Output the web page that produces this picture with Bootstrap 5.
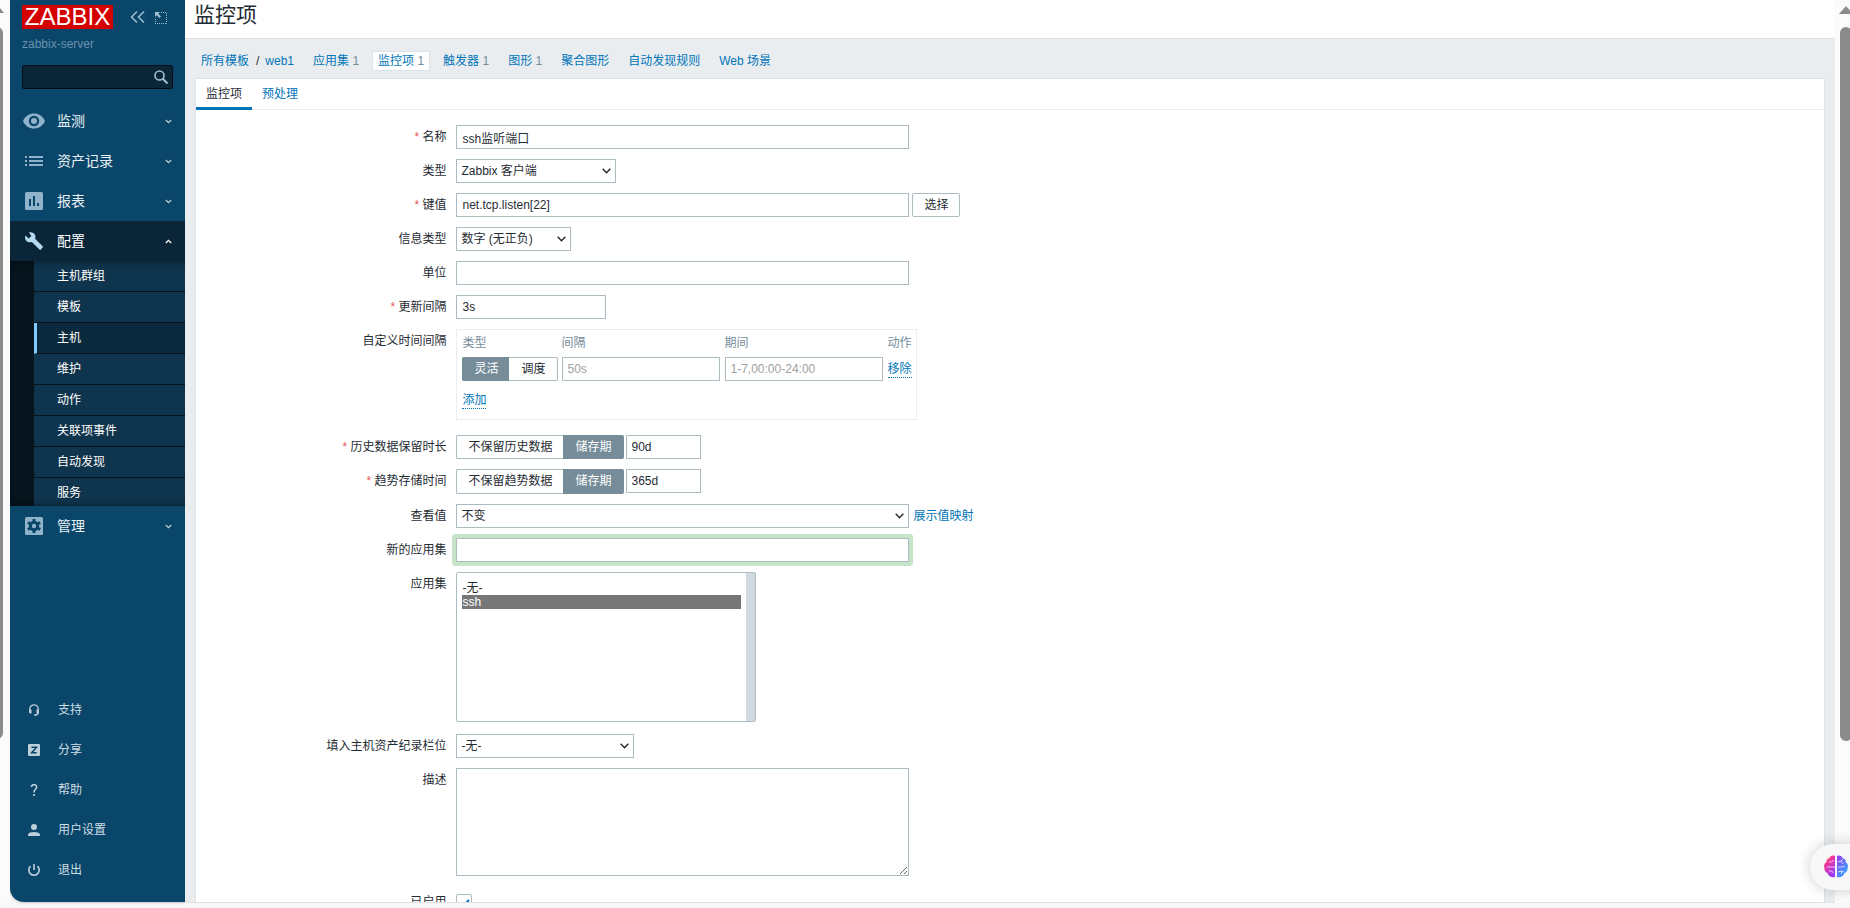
<!DOCTYPE html>
<html lang="zh-CN">
<head>
<meta charset="utf-8">
<meta name="viewport" content="width=device-width, initial-scale=1">
<title>监控项</title>
<link href="https://cdn.jsdelivr.net/npm/bootstrap@5.3.0/dist/css/bootstrap.min.css" rel="stylesheet">
<style>
:root{--zbx-font:"Liberation Sans","Noto Sans CJK SC",sans-serif;--line:#acbbc2;--link:#0275b8;--ink:#1f2c33}
html,body{height:100%}
body{font:12px/16px var(--zbx-font);color:var(--ink);background:#f7f7f7;overflow:hidden;padding-bottom:5px}
a{color:var(--link);text-decoration:none}
.window-body{height:100%;min-height:0}
.edge{width:10px;background:#fbfbfb;position:relative;overflow:hidden}
.edge-thumb{width:12px;height:712px;margin:27px 0 0 -9px;border-radius:6px;background:#8b8b8b}
.page-scroll{width:15px;background:#fbfbfb;overflow:hidden}
.page-scroll svg{display:block;margin:6px 0 0 4px}
.page-thumb{width:12px;height:714px;margin:13px 0 0 5px;border-radius:6px;background:#8b8b8b}
.side{width:175px;margin-bottom:1px;background:#0a466a;border-bottom-left-radius:14px;box-shadow:0 0 3px #0006}
.side-top{padding:5px 12px 0}
.brand{background:#d40000;color:#fff;font-size:24px;line-height:24px;width:91px;text-align:center}
.brand:hover{color:#fff}
.icon-btn{border:0;background:none;padding:0;color:#9ec0d2;line-height:0}
.server{color:#6b93ac;padding-top:7px}
.search{margin-top:13px}
.search input{width:100%;height:24px;background:#0a2537;border:1px solid #020d14;border-radius:2px;color:#fff;padding:0 26px 0 5px}
.search button{position:absolute;right:4px;top:4px}
.menu{margin-top:12px}
.menu-link{height:40px;padding:0 13px 0 15px;font-size:14px;color:#e8f0f4}
.menu-link svg:first-child{width:18px;margin-right:14px;color:#8fb3ca;flex:none;overflow:visible}
.menu-link.open{background:#0a2537;color:#fff}
.menu-link.open svg:first-child{color:#b5d9f0}
.sub{background:#05141d;padding-left:24px;height:245px;overflow:hidden;position:relative}
.sub::after{content:"";position:absolute;inset:0;pointer-events:none;box-shadow:inset 0 6px 6px -5px #0006,inset 0 -6px 6px -5px #0006}
.sub a{display:block;height:31px;line-height:31px;padding-left:23px;color:#fff;background:#0f344d;border-bottom:1px solid #05141d}
.sub a.here{background:#0b2a3d;border-left:3px solid #7dcaff;padding-left:20px}
.foot{padding-bottom:12px}
.foot a{height:40px;padding-left:18px;color:#cfdde5}
.foot svg{width:12px;height:12px;margin-right:18px;color:#bccfdb}
.main{background:#e9edf0;min-width:0;border-bottom:1px solid #dfe0e1}
.title-bar{background:#fff;border-bottom:1px solid #dce2e5;height:39px}
h1{font-size:21px;line-height:30px;margin:0;padding-left:9px}
.crumbs{height:39px;padding:5px 10px 0}
.trail{padding:0 7px 0 6px}
.trail-end{padding:0 13px 0 6px}
.crumb{padding:1px 5px;height:20px;border:1px solid transparent;margin-right:7px}
.crumb.sel{background:#fff;border-color:#dce2e5}
.crumb span{color:#768d99}
.panel{margin:0 10px;background:#fff;border:1px solid #dce2e5;border-bottom:0;min-height:0;overflow:hidden}
.tabs{border-bottom:1px solid #ebedee;height:31px}
.tabs a{padding:7px 10px 0;height:31px}
.tabs a.sel{color:var(--ink);border-bottom:3px solid var(--link)}
.fields{padding-top:15px}
.line{display:flex;margin-bottom:10px}
.line>.cap{flex:0 0 16%;padding:4px 10px 0 0;text-align:right;min-width:160px}
.line.after-list{margin-bottom:12px}
.line.after-area{margin-bottom:18px}
.req::before{content:"* ";color:#e45959}
.box,.pick,.area,.list{border:1px solid var(--line);background-color:#fff;color:var(--ink);height:24px;padding:0 5px;border-radius:0;outline:0}
.box::placeholder{color:#a0a0a0}
.pick{appearance:none;padding:0 20px 0 4px;background:#fff url("data:image/svg+xml,%3Csvg xmlns='http://www.w3.org/2000/svg' width='9' height='6'%3E%3Cpath d='M.7.8 4.5 4.7 8.3.8' fill='none' stroke='%23222' stroke-width='1.3'/%3E%3C/svg%3E") no-repeat right 4px top 8px}
.w-full{width:453px}.w-mid{width:150px}.w-s{width:75px;margin-left:2px}.w-int{width:158px}
.pick.t160{width:160px}.pick.t115{width:115px}.pick.t178{width:178px}
.plain-btn{border:1px solid var(--line);background:#fff;border-radius:2px;height:24px;width:48px;padding:0;color:var(--ink);margin-left:3px}
.focus-box{box-shadow:0 0 0 4px #c5e4c8;border-radius:1px}
.seg{display:flex}
.seg label{height:24px;line-height:22px;border:1px solid var(--line);padding:0 11px}
.seg label:first-of-type{border-right:0;border-radius:2px 0 0 2px}
.seg label:last-of-type{border-left:0;border-radius:0 2px 2px 0;padding-left:12px}
.seg.tall label{height:25px;line-height:23px}
.seg .btn-check:checked+label{background:#768d99;border-color:#768d99;color:#fff}
.intervals{border:1px solid #ebedee;width:461px;height:91px;margin-bottom:5px}
.intervals table{border-collapse:collapse;margin:0 0 0 2px}
.intervals th{font-weight:400;color:#768d99;padding:5px 2px 0 3px;height:27px;vertical-align:top}
.intervals td{padding:0 2px 0 3px}
.intervals td:first-child{padding-right:1px}
.dotted{border-bottom:1px dotted var(--link);line-height:16px;display:inline-block}
.intervals .add{margin:11px 0 0 5px}
.list{width:300px;height:150px;border-radius:2px;padding:5px 14px 0 5px;overflow:hidden;background:linear-gradient(#d1dade,#d1dade) right/9px 100% no-repeat #fff}
.list option{padding:0;min-height:14px;line-height:14px}
.list option:checked{background:#777 linear-gradient(#777,#777);color:#fff}
.area{height:108px;display:block}
.tick{appearance:none;width:16px;height:16px;border:1px solid var(--line);border-radius:2px;margin:0;background:url("data:image/svg+xml,%3Csvg xmlns='http://www.w3.org/2000/svg' width='14' height='14'%3E%3Cpath d='M3 8l3 3 6-6' fill='none' stroke='%230275b8' stroke-width='2'/%3E%3C/svg%3E")}
.helper{position:fixed;right:-24px;bottom:18px;width:64px;height:46px;border:0;border-radius:23px;background:#f8f8f8;box-shadow:0 0 14px #0003;padding:0 0 0 14px;text-align:left}
</style>
</head>
<body>
<svg class="d-none">
<symbol id="down" viewBox="0 0 7 5"><path d="M.8 1 3.5 3.7 6.2 1" fill="none" stroke="#b5ccd9" stroke-width="1.3"/></symbol>
</svg>
<div class="window-body d-flex">
<div class="edge flex-shrink-0"><svg class="position-absolute top-0 start-0 mt-2" width="4" height="5"><path d="M0 0 4 5H0z" fill="#8b8b8b"/></svg><div class="edge-thumb"></div></div>
<aside class="side d-flex flex-column flex-shrink-0">
<div class="side-top">
<div class="d-flex align-items-center">
<a href="#" class="brand">ZABBIX</a>
<button class="icon-btn ms-3" aria-label="收起"><svg width="16" height="12" fill="none" stroke="currentColor" stroke-width="1.5"><path d="M8 .5 2.500 6 8 11.500M15 .5 9.500 6 15 11.500"/></svg></button>
<button class="icon-btn ms-2" aria-label="隐藏"><svg width="15" height="13"><path d="M8 1.500H14M13.500 2V12.500M2.500 8V12.500M2 12.500H14" fill="none" stroke="currentColor" stroke-dasharray="1 1"/><path d="M2 1H7L5.300 2.700 8 5.400 6.400 7 3.700 4.300 2 6z" fill="currentColor"/></svg></button>
</div>
<div class="server">zabbix-server</div>
<form class="search position-relative"><input type="text" aria-label="搜索"><button type="button" class="icon-btn" aria-label="搜索"><svg width="16" height="16" fill="none" stroke="currentColor"><circle cx="6.500" cy="6.500" r="4.500" stroke-width="1.600"/><path d="M9.800 9.800 14.500 14.500" stroke-width="2"/></svg></button></form>
</div>
<nav class="menu">
<a href="#" class="menu-link d-flex align-items-center"><svg height="16" viewBox="0 0 18 16"><path fill="currentColor" fill-rule="evenodd" d="M-2 8C2-2 16-2 20 8 16 18 2 18-2 8zM9 2.800a5.200 5.200 0 1 0 0 10.400A5.200 5.200 0 0 0 9 2.800z"/><circle cx="9" cy="8" r="3" fill="currentColor"/></svg><span class="flex-grow-1">监测</span><svg width="7" height="5"><use href="#down"/></svg></a>
<a href="#" class="menu-link d-flex align-items-center"><svg height="12" viewBox="0 0 18 12"><path fill="currentColor" d="M0 1h2v2H0zM4 1h14v2H4zM0 5h2v2H0zM4 5h14v2H4zM0 9h2v2H0zM4 9h14v2H4z"/></svg><span class="flex-grow-1">资产记录</span><svg width="7" height="5"><use href="#down"/></svg></a>
<a href="#" class="menu-link d-flex align-items-center"><svg height="18"><rect width="18" height="18" rx="1.500" fill="currentColor"/><path fill="#0a466a" d="M4 7h2v7H4zM8 4h2v10H8zM12 11h2v3h-2z"/></svg><span class="flex-grow-1">报表</span><svg width="7" height="5"><use href="#down"/></svg></a>
<a href="#" class="menu-link open d-flex align-items-center"><svg height="18" viewBox="0 0 18 18"><path fill="currentColor" d="M4 .4C6.500-.4 9 .6 10 2.800c.6 1.300.6 2.700.1 3.900l7.600 7.600c.4.400.4.900 0 1.300l-1.900 2c-.4.400-.9.400-1.300 0L6.900 10C4.900 10.700 2.700 10.200 1.300 8.700-.1 7.300-.4 5.200.5 3.500l3.200 3.100 2.600-2.500z"/></svg><span class="flex-grow-1">配置</span><svg width="7" height="5"><path d="M.8 4 3.500 1.300 6.200 4" fill="none" stroke="#fff" stroke-width="1.300"/></svg></a>
<div class="sub"><a href="#">主机群组</a><a href="#">模板</a><a href="#" class="here">主机</a><a href="#">维护</a><a href="#">动作</a><a href="#">关联项事件</a><a href="#">自动发现</a><a href="#">服务</a></div>
<a href="#" class="menu-link d-flex align-items-center"><svg height="18"><rect width="18" height="18" rx="1.500" fill="currentColor"/><circle cx="9" cy="9" r="3.700" fill="none" stroke="#0a466a" stroke-width="3"/><path d="M9 2v14M2.900 5.500l12.200 7M2.900 12.500l12.200-7" stroke="#0a466a" stroke-width="3"/><circle cx="9" cy="9" r="2.200" fill="currentColor"/></svg><span class="flex-grow-1">管理</span><svg width="7" height="5"><use href="#down"/></svg></a>
</nav>
<nav class="foot mt-auto">
<a href="#" class="d-flex align-items-center"><svg viewBox="0 0 12 12"><path d="M1.800 7V5a4.200 4.200 0 0 1 8.400 0v4.500L8.500 11H6" fill="none" stroke="currentColor" stroke-width="1.300"/><path d="M1 5.500h2.500V9.500H2L1 8.500zM8.500 5.500H11v3L10 9.500H8.500z" fill="currentColor"/></svg>支持</a>
<a href="#" class="d-flex align-items-center"><svg viewBox="0 0 12 12"><rect width="12" height="12" rx="1" fill="currentColor"/><path d="M3.500 3.200h5L3.700 8.800h5" fill="none" stroke="#0a466a" stroke-width="1.500"/></svg>分享</a>
<a href="#" class="d-flex align-items-center"><svg viewBox="0 0 12 12"><path d="M3.500 3C3.500 0 8.700 0 8.700 3 8.700 5 6 5.200 6 8.500" fill="none" stroke="currentColor" stroke-width="1.600"/><path d="M5.200 10h1.700v2H5.200z" fill="currentColor"/></svg>帮助</a>
<a href="#" class="d-flex align-items-center"><svg viewBox="0 0 12 12"><circle cx="6" cy="3" r="3" fill="currentColor"/><path d="M0 12V10.500C1 7.300 11 7.300 12 10.500V12z" fill="currentColor"/></svg>用户设置</a>
<a href="#" class="d-flex align-items-center"><svg viewBox="0 0 12 12"><path d="M2.500 2.200a5.200 5.200 0 1 0 7 0M6 0v6" fill="none" stroke="currentColor" stroke-width="1.600"/></svg>退出</a>
</nav>
</aside>
<main class="main d-flex flex-column flex-grow-1">
<header class="title-bar flex-shrink-0"><h1 class="fw-normal">监控项</h1></header>
<nav class="crumbs d-flex align-items-center flex-shrink-0"><a href="#" class="trail">所有模板</a>/<a href="#" class="trail-end">web1</a><a href="#" class="crumb">应用集 <span>1</span></a><a href="#" class="crumb sel">监控项 <span>1</span></a><a href="#" class="crumb">触发器 <span>1</span></a><a href="#" class="crumb">图形 <span>1</span></a><a href="#" class="crumb">聚合图形</a><a href="#" class="crumb">自动发现规则</a><a href="#" class="crumb">Web 场景</a></nav>
<section class="panel flex-grow-1">
<div class="tabs d-flex"><a href="#" class="sel">监控项</a><a href="#">预处理</a></div>
<form class="fields">
<div class="line"><label class="cap req" for="name">名称</label><input id="name" class="box w-full" value="ssh监听端口"></div>
<div class="line"><label class="cap" for="type">类型</label><select id="type" class="pick t160"><option>Zabbix 客户端</option></select></div>
<div class="line"><label class="cap req" for="key">键值</label><input id="key" class="box w-full" value="net.tcp.listen[22]"><button type="button" class="plain-btn">选择</button></div>
<div class="line"><label class="cap" for="vt">信息类型</label><select id="vt" class="pick t115"><option>数字 (无正负)</option></select></div>
<div class="line"><label class="cap" for="units">单位</label><input id="units" class="box w-full"></div>
<div class="line"><label class="cap req" for="delay">更新间隔</label><input id="delay" class="box w-mid" value="3s"></div>
<div class="line"><span class="cap">自定义时间间隔</span>
<div class="intervals">
<table><thead><tr><th>类型</th><th>间隔</th><th>期间</th><th>动作</th></tr></thead>
<tbody><tr><td><div class="seg"><input type="radio" class="btn-check" name="iv" id="iv0" checked><label for="iv0">灵活</label><input type="radio" class="btn-check" name="iv" id="iv1"><label for="iv1">调度</label></div></td>
<td><input class="box w-int" placeholder="50s" aria-label="间隔"></td><td><input class="box w-int" placeholder="1-7,00:00-24:00" aria-label="期间"></td><td><a href="#" class="dotted">移除</a></td></tr></tbody></table>
<a href="#" class="dotted add">添加</a>
</div></div>
<div class="line"><label class="cap req" for="hist">历史数据保留时长</label><div class="seg"><input type="radio" class="btn-check" name="h" id="h0"><label for="h0">不保留历史数据</label><input type="radio" class="btn-check" name="h" id="h1" checked><label for="h1">储存期</label></div><input id="hist" class="box w-s" value="90d"></div>
<div class="line"><label class="cap req" for="trend">趋势存储时间</label><div class="seg tall"><input type="radio" class="btn-check" name="t" id="t0"><label for="t0">不保留趋势数据</label><input type="radio" class="btn-check" name="t" id="t1" checked><label for="t1">储存期</label></div><input id="trend" class="box w-s" value="365d"></div>
<div class="line"><label class="cap" for="vm">查看值</label><select id="vm" class="pick w-full"><option>不变</option></select><a href="#" class="ms-1 pt-1">展示值映射</a></div>
<div class="line"><label class="cap" for="napp">新的应用集</label><input id="napp" class="box w-full focus-box"></div>
<div class="line after-list"><label class="cap" for="apps">应用集</label><select id="apps" class="list" multiple><option>-无-</option><option selected>ssh</option></select></div>
<div class="line"><label class="cap" for="inv">填入主机资产纪录栏位</label><select id="inv" class="pick t178"><option>-无-</option></select></div>
<div class="line after-area"><label class="cap" for="desc">描述</label><textarea id="desc" class="area w-full"></textarea></div>
<div class="line"><label class="cap pt-0" for="on">已启用</label><input type="checkbox" id="on" class="tick" checked></div>
</form>
</section>
</main>
<div class="page-scroll flex-shrink-0"><svg width="14" height="8"><path d="M0 8 7 0 14 8z" fill="#8b8b8b"/></svg><div class="page-thumb"></div></div>
</div>
<button class="helper" aria-label="助手"><svg width="24" height="24" viewBox="0 0 24 24"><defs><linearGradient id="ga" x2="0.600" y2="1"><stop stop-color="#ff9a2e"/><stop offset=".4" stop-color="#f0359f"/><stop offset="1" stop-color="#9a3df0"/></linearGradient><linearGradient id="gb" x2=".7" y2="1"><stop stop-color="#9a3df0"/><stop offset="1" stop-color="#2ea8ff"/></linearGradient></defs><path fill="url(#ga)" d="M11 1C8 0 6 1 5.500 3 3 3.500 2 5.500 2.500 7 0 8.500-.5 11 .5 13c-.3 3 1 4.500 3 5 .5 3 4 5 7.500 4z"/><path fill="url(#gb)" d="M13 1c3-1 5 0 5.500 2 2.500.5 3.500 2.500 3 4 2.500 1.500 3 4 2 6 .3 3-1 4.500-3 5-.5 3-4 5-7.500 4z"/><path d="M3 12h8M5 7c2 0 4 0 4-2M5 16c2 0 4 0 4 2M14 7l3-1 2-2M17 6l2 3M14 12h4l3-1M14 17l3-1 3 1M17 16l1 3" fill="none" stroke="#fff" stroke-opacity=".7"/></svg></button>
<script src="https://cdn.jsdelivr.net/npm/bootstrap@5.3.0/dist/js/bootstrap.bundle.min.js"></script>
</body>
</html>
